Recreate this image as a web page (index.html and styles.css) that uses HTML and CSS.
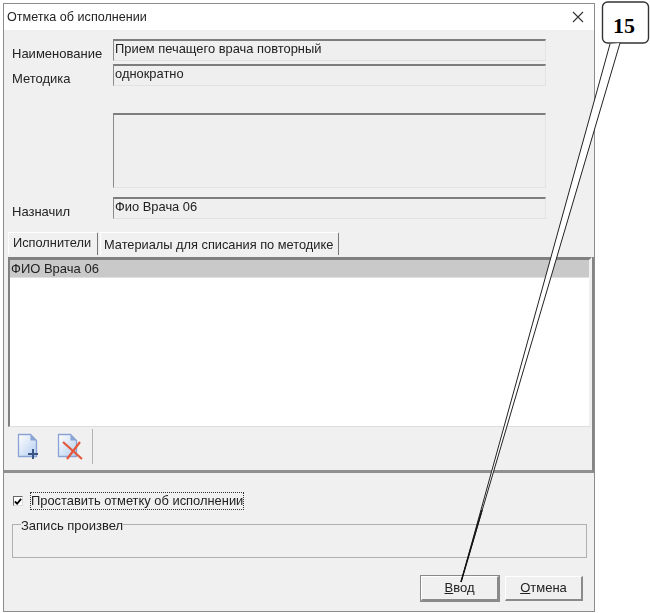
FILE: index.html
```html
<!DOCTYPE html>
<html lang="ru">
<head>
  <meta charset="UTF-8">
  <meta name="viewport" content="width=device-width, initial-scale=1.0">
  <title>Отметка об исполнении</title>
  <link rel="stylesheet" href="styles.css">
</head>
<body>

<div class="dialog">
  <div class="titlebar">
    <span>Отметка об исполнении</span>
    <svg class="close" width="12" height="12" viewBox="0 0 12 12">
      <path d="M1 1L11 11M11 1L1 11" stroke="#333" stroke-width="1.1" fill="none"/>
    </svg>
  </div>

  <div class="form">
    <label class="form-label">Наименование</label>
    <div class="field">Прием печащего врача повторный</div>
    <label class="form-label">Методика</label>
    <div class="field">однократно</div>
    <div class="field memo"></div>
    <label class="form-label">Назначил</label>
    <div class="field">Фио Врача 06</div>
  </div>

  <div class="tabs">
    <div class="tab active">Исполнители</div>
    <div class="tab">Материалы для списания по методике</div>
  </div>

  <div class="tab-panel">
    <div class="list">
      <div class="list-row selected">ФИО Врача 06</div>
    </div>
    <div class="toolbar">
      <button class="tool-btn" type="button">
        <svg width="30" height="28" viewBox="0 0 30 28">
          <defs>
            <linearGradient id="page1" x1="0" y1="0" x2="1" y2="1">
              <stop offset="0" stop-color="#ffffff"/>
              <stop offset="1" stop-color="#b4cdf0"/>
            </linearGradient>
          </defs>
          <path d="M3.5 2.5H15.5L21.5 8.5V24.5H3.5Z" fill="url(#page1)" stroke="#8ba3d4" stroke-width="1.3"/>
          <path d="M15.5 2.5V8.5H21.5Z" fill="#8ba3d4"/>
          <path d="M18 17V27M13 22H23" stroke="#3a5484" stroke-width="2" fill="none"/>
        </svg>
      </button>
      <button class="tool-btn" type="button">
        <svg width="30" height="28" viewBox="0 0 30 28">
          <defs>
            <linearGradient id="page2" x1="0" y1="0" x2="1" y2="1">
              <stop offset="0" stop-color="#ffffff"/>
              <stop offset="1" stop-color="#b4cdf0"/>
            </linearGradient>
          </defs>
          <path d="M3.5 2.5H15.5L21.5 8.5V24.5H3.5Z" fill="url(#page2)" stroke="#8ba3d4" stroke-width="1.3"/>
          <path d="M15.5 2.5V8.5H21.5Z" fill="#8ba3d4"/>
          <path d="M8 10L27 27M25 10L12 27" stroke="#e4573a" stroke-width="2.2" fill="none"/>
        </svg>
      </button>
      <div class="tool-sep"></div>
    </div>
  </div>

  <div class="bottom">
    <div class="check-row">
      <span class="checkbox">
        <svg width="9" height="9" viewBox="0 0 9 9">
          <path d="M1 4.5L3.5 7L8 1.5" stroke="#000" stroke-width="2" fill="none"/>
        </svg>
      </span>
      <span class="check-label">Проставить отметку об исполнении</span>
    </div>

    <fieldset class="group">
      <legend>Запись произвел</legend>
    </fieldset>

    <div class="buttons">
      <button class="btn default" type="button"><u>В</u>вод</button>
      <button class="btn" type="button"><u>О</u>тмена</button>
    </div>
  </div>
</div>

<svg class="callout" width="650" height="613" viewBox="0 0 650 613">
  <rect x="602.5" y="2" width="46" height="41" rx="5" fill="#fff" stroke="#333" stroke-width="1.4"/>
  <path d="M610 44L620 43L461 582Z" fill="#fff"/>
  <path d="M610 44L461 582L620 43" fill="none" stroke="#222" stroke-width="1"/>
  <path d="M482 510L461 582" fill="none" stroke="#111" stroke-width="1.4"/>
  <text x="624" y="33" text-anchor="middle" class="callout-num">15</text>
</svg>

</body>
</html>
```

FILE: styles.css
```css
body {
  font-family: 'Liberation Sans', Arial, sans-serif;
  font-size: 13px;
  color: #222;
  background-color: #fff;
  margin: 0;
  padding: 3px 0 0 3px;
  height: 613px;
  box-sizing: border-box;
  overflow: hidden;
}
.dialog {
  width: 592px;
  height: 609px;
  box-sizing: border-box;
  border: 1px solid #8c8c8c;
  background-color: #f0f0f0;
  display: flex;
  flex-direction: column;
  filter: blur(0.35px);
}
.titlebar {
  height: 26px;
  flex: none;
  background-color: #fff;
  font-size: 12.6px;
  display: flex;
  align-items: center;
  justify-content: space-between;
  padding: 0 10px 0 3px;
}
.form {
  display: grid;
  grid-template-columns: 101px 433px;
  row-gap: 3px;
  padding: 9px 0 0 8px;
}
.form-label {
  grid-column: 1;
  padding-top: 8px;
  line-height: 14px;
  white-space: nowrap;
}
.field {
  grid-column: 2;
  height: 22px;
  box-sizing: border-box;
  padding: 1px 0 0 1px;
  font-size: 12.9px;
  line-height: 14px;
  background-color: #efefef;
  border-top: 2px solid #7d7d7d;
  border-left: 1px solid #8a8a8a;
  border-right: 1px solid #e2e2e2;
  border-bottom: 1px solid #e2e2e2;
}
.memo {
  height: 75px;
  margin: 24px 0 6px;
}
.tabs {
  display: flex;
  gap: 2px;
  margin: 13px 0 0 4px;
  height: 23px;
  flex: none;
  font-size: 12.8px;
}
.tab {
  box-sizing: border-box;
  padding: 5px 5px 0 3px;
  line-height: 14px;
  border-top: 1px solid #fff;
  border-left: 1px solid #fff;
  border-right: 1px solid #777;
  border-top-right-radius: 2px;
  white-space: nowrap;
}
.tab.active {
  width: 90px;
  padding: 3px 0 0 4px;
}
.tab-panel {
  margin-top: 2px;
  height: 213px;
  flex: none;
  border-right: 2px solid #858585;
  border-bottom: 3px solid #909090;
  padding-left: 4px;
}
.list {
  height: 170px;
  box-sizing: border-box;
  background-color: #fff;
  border-top: 3px solid #808080;
  border-left: 2px solid #808080;
  border-right: 3px solid #f0f0f0;
  border-bottom: 1px solid #ddd;
}
.list-row {
  height: 17px;
  line-height: 17px;
  padding-left: 1px;
}
.selected {
  background-color: #c9c9c9;
  border-bottom: 1px solid #e0e0e0;
}
.toolbar {
  display: flex;
  align-items: center;
  height: 38px;
  padding-left: 7px;
  gap: 10px;
}
.tool-btn {
  border: none;
  background: none;
  padding: 0;
  width: 30px;
  height: 28px;
  display: flex;
}
.tool-sep {
  width: 1px;
  height: 35px;
  background-color: #b4b4b4;
  margin-left: -3px;
}
.bottom {
  flex: 1;
  padding: 19px 6px 0 8px;
  display: flex;
  flex-direction: column;
}
.check-row {
  display: flex;
  align-items: center;
  height: 18px;
}
.checkbox {
  width: 10px;
  height: 10px;
  box-sizing: border-box;
  margin: 0 7px 0 1px;
  background-color: #fff;
  border-top: 1px solid #666;
  border-left: 1px solid #666;
  border-right: 1px solid #ddd;
  border-bottom: 1px solid #ddd;
  display: flex;
  align-items: center;
  justify-content: center;
}
.check-label {
  height: 18px;
  font-size: 12.9px;
  line-height: 16px;
  box-sizing: border-box;
  border: 1px dotted #333;
  width: 214px;
  white-space: nowrap;
}
.group {
  height: 41px;
  box-sizing: border-box;
  margin: 7px 0 0;
  padding: 0;
  border: 1px solid #b0b0b0;
  min-width: 0;
  width: 575px;
}
.group legend {
  padding: 0;
  margin-left: 8px;
  line-height: 14px;
  position: relative;
  top: 2px;
}
.buttons {
  display: flex;
  justify-content: flex-end;
  gap: 6px;
  margin: 18px 5px 0 0;
}
.btn {
  font: inherit;
  color: inherit;
  width: 78px;
  height: 25px;
  padding: 0 0 2px;
  background-color: #f0f0f0;
  border-top: 1px solid #fff;
  border-left: 1px solid #fff;
  border-right: 2px solid #8a8a8a;
  border-bottom: 2px solid #8a8a8a;
}
.btn.default {
  outline: 1px solid #888;
}
.callout {
  position: absolute;
  left: 0;
  top: 0;
}
.callout-num {
  font-family: 'Liberation Serif', serif;
  font-weight: bold;
  font-size: 22px;
  fill: #000;
}
```
